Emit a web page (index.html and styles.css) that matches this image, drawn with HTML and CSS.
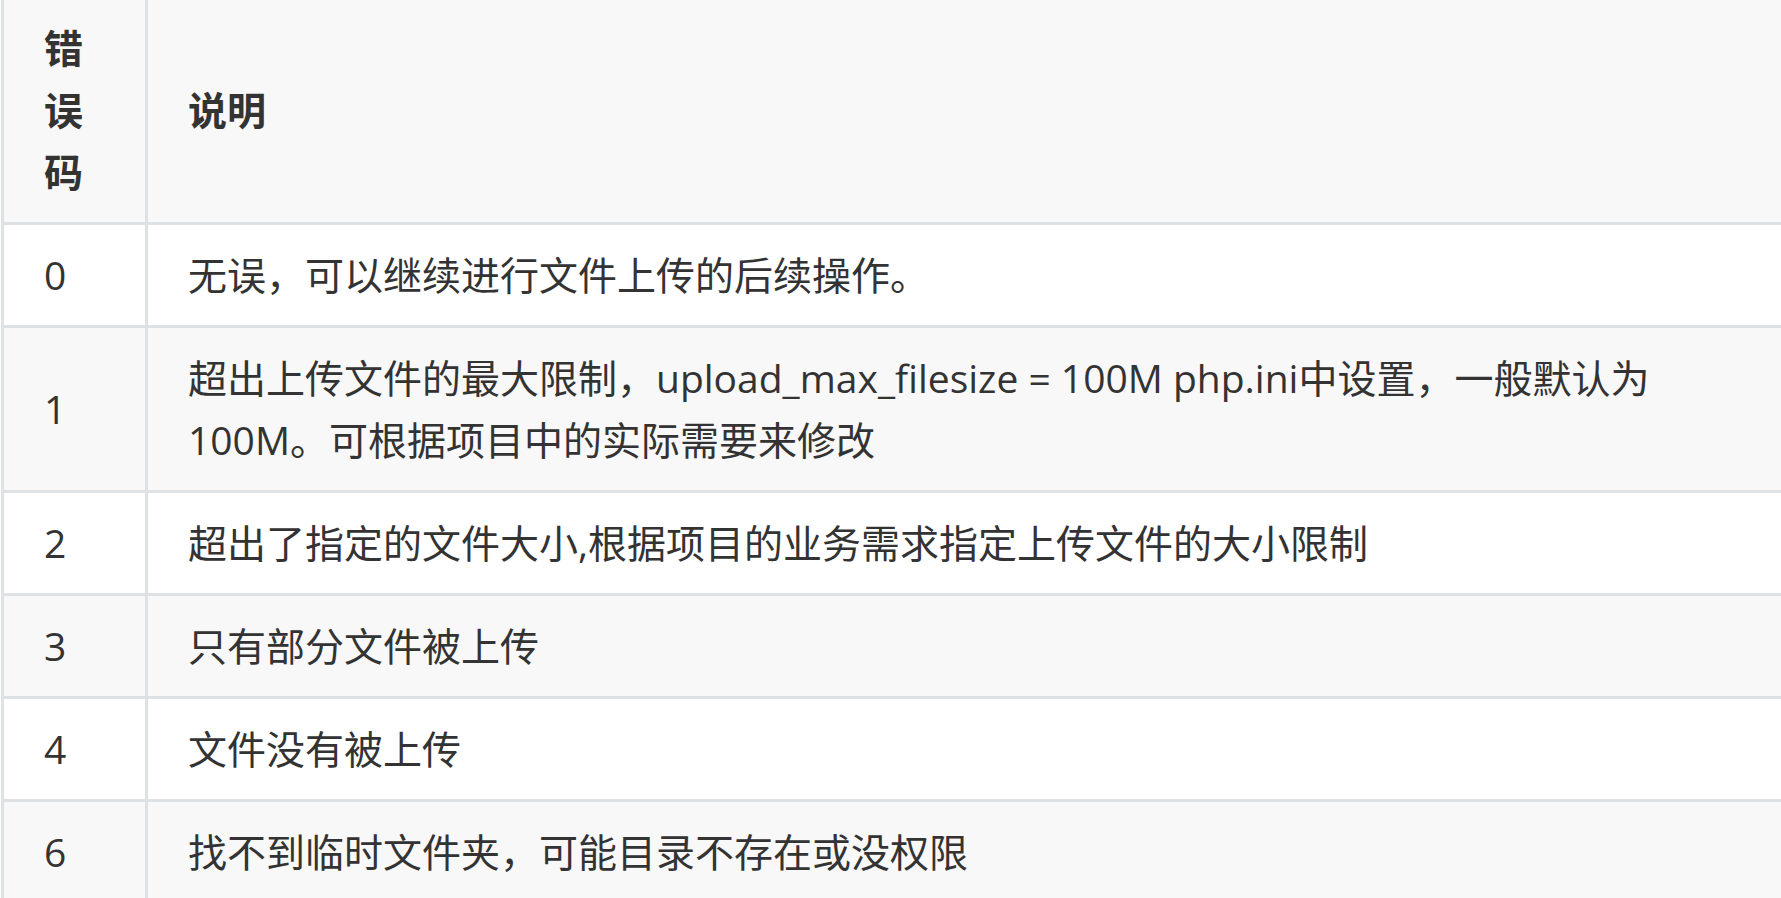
FILE: index.html
```html
<!DOCTYPE html>
<html lang="zh-CN">
<head>
<meta charset="utf-8">
<title>错误码说明</title>
<link rel="stylesheet" href="styles.css">
</head>
<body>
<div class="wrap">
<table class="codes">
  <thead>
    <tr><th class="code">错误码</th><th>说明</th></tr>
  </thead>
  <tbody>
    <tr><td class="code">0</td><td>无误，可以继续进行文件上传的后续操作。</td></tr>
    <tr><td class="code">1</td><td>超出上传文件的最大限制，upload_max_filesize = 100M php.ini中设置，一般默认为100M。可根据项目中的实际需要来修改</td></tr>
    <tr><td class="code">2</td><td>超出了指定的文件大小,根据项目的业务需求指定上传文件的大小限制</td></tr>
    <tr><td class="code">3</td><td>只有部分文件被上传</td></tr>
    <tr><td class="code">4</td><td>文件没有被上传</td></tr>
    <tr><td class="code">6</td><td>找不到临时文件夹，可能目录不存在或没权限</td></tr>
  </tbody>
</table>
</div>
</body>
</html>
```

FILE: styles.css
```css
html, body {
  margin: 0;
  padding: 0;
  background: #ffffff;
  overflow: hidden;
}

.wrap {
  padding-left: 1px;
}

.codes {
  width: 1800px;
  table-layout: fixed;
  border-collapse: separate;
  border-spacing: 0;
  font-family: "Open Sans", "Noto Sans CJK SC", sans-serif;
  font-size: 39px;
  line-height: 62px;
  color: #333333;
}

.codes th,
.codes td {
  padding: 19px 40px;
  border-left: 3px solid #dfe2e5;
  border-bottom: 3px solid #dfe2e5;
  text-align: left;
  vertical-align: middle;
}

.codes th {
  padding-top: 17px;
  font-weight: bold;
  background: #f8f8f8;
}

.codes th.code,
.codes td.code {
  width: 61px;
}

.codes tbody tr:nth-child(even) td {
  background: #f8f8f8;
}

.codes tbody tr:nth-child(odd) td {
  background: #ffffff;
}
```
